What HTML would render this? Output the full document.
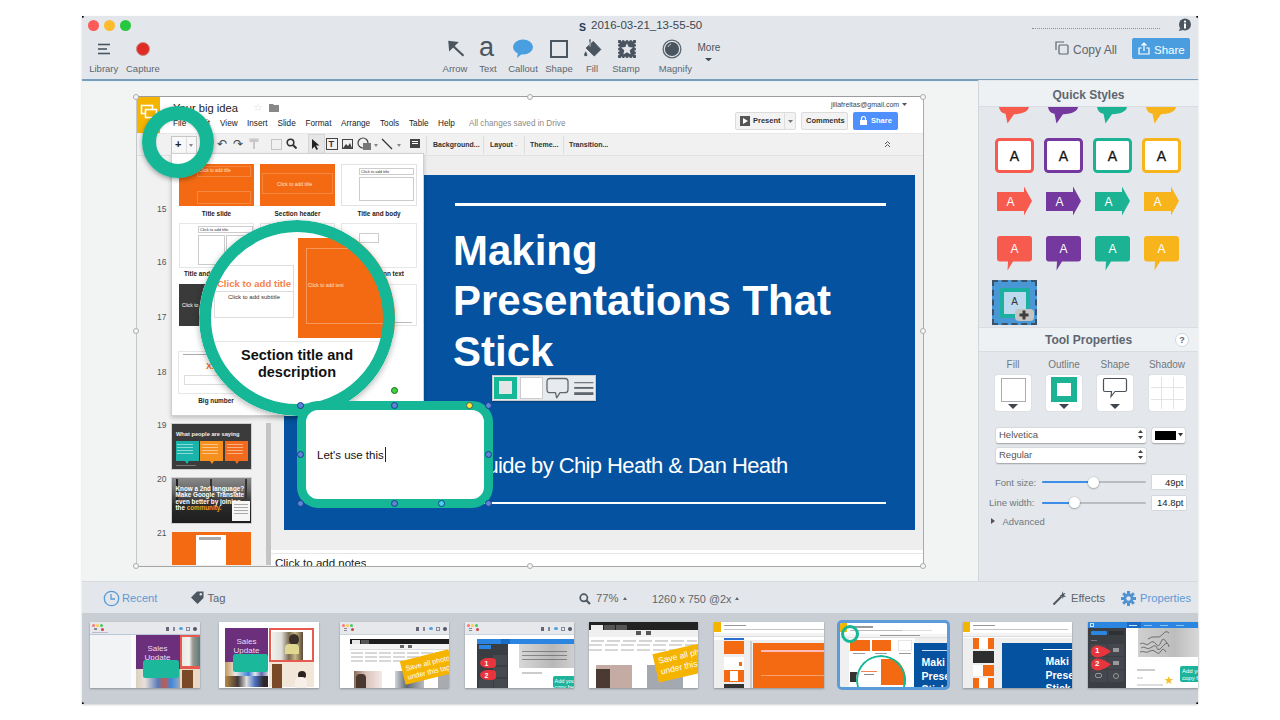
<!DOCTYPE html>
<html><head><meta charset="utf-8">
<style>
*{margin:0;padding:0;box-sizing:border-box}
html,body{width:1280px;height:720px;overflow:hidden;background:#fff;font-family:"Liberation Sans",sans-serif}
.a{position:absolute}
.t{position:absolute;white-space:nowrap;line-height:1}
#win{position:absolute;left:82px;top:16px;width:1116px;height:688px;background:#e4e7eb;overflow:hidden;box-shadow:0 1px 2px rgba(0,0,0,.18)}
</style></head><body>
<div id="win">
  <!-- toolbar -->
  <div class="a" style="left:0;top:0;width:1116px;height:63px;background:#e3e6ea"></div>
  <div class="a" style="left:0;top:63px;width:1116px;height:1.6px;background:#7b9db9"></div>
  <div class="a" style="left:0;top:61.5px;width:1116px;height:1.5px;background:#dde8f0"></div>
  <!-- traffic lights -->
  <div class="a" style="left:6px;top:4px;width:11px;height:11px;border-radius:50%;background:#fc5b57"></div>
  <div class="a" style="left:22px;top:4px;width:11px;height:11px;border-radius:50%;background:#fdbb2d"></div>
  <div class="a" style="left:38px;top:4px;width:11px;height:11px;border-radius:50%;background:#27c840"></div>


  <!-- toolbar items -->
  <svg class="a" style="left:15px;top:27px" width="14" height="12" viewBox="0 0 14 12"><g stroke="#4a5560" stroke-width="1.6"><line x1="1" y1="1.5" x2="13" y2="1.5"/><line x1="1" y1="6" x2="10" y2="6"/><line x1="1" y1="10.5" x2="13" y2="10.5"/></g></svg>
  <div class="a" style="left:53.5px;top:25.75px;width:14px;height:14px;border-radius:50%;background:#e02a24;border:1.5px solid #c98b8b"></div>

  <div class="t" style="left:-8.25px;top:48px;width:60px;text-align:center;font-size:9.5px;color:#5d6670">Library</div>
  <div class="t" style="left:30.900000000000006px;top:48px;width:60px;text-align:center;font-size:9.5px;color:#5d6670">Capture</div>
  <div class="t" style="left:343px;top:48px;width:60px;text-align:center;font-size:9.5px;color:#5d6670">Arrow</div>
  <div class="t" style="left:376px;top:48px;width:60px;text-align:center;font-size:9.5px;color:#5d6670">Text</div>
  <div class="t" style="left:411px;top:48px;width:60px;text-align:center;font-size:9.5px;color:#5d6670">Callout</div>
  <div class="t" style="left:447px;top:48px;width:60px;text-align:center;font-size:9.5px;color:#5d6670">Shape</div>
  <div class="t" style="left:480px;top:48px;width:60px;text-align:center;font-size:9.5px;color:#5d6670">Fill</div>
  <div class="t" style="left:514px;top:48px;width:60px;text-align:center;font-size:9.5px;color:#5d6670">Stamp</div>
  <div class="t" style="left:563.5px;top:48px;width:60px;text-align:center;font-size:9.5px;color:#5d6670">Magnify</div>
  <div class="t" style="left:497px;top:6px;font-size:10.5px;font-weight:bold;color:#1f3d5a">S</div>
  <div class="t" style="left:509px;top:4px;font-size:11.5px;color:#3e4750">2016-03-21_13-55-50</div>

  <svg class="a" style="left:364px;top:24px" width="20" height="18" viewBox="0 0 20 18"><path d="M2.2 0.8 L12.8 2 L3.2 11.5 Z" fill="#4a5560"/><line x1="6.5" y1="5.5" x2="17.5" y2="15.8" stroke="#4a5560" stroke-width="2.2"/></svg>
  <div class="t" style="left:397px;top:18px;font-size:27px;color:#4a5560;font-family:'Liberation Sans',sans-serif">a</div>
  <svg class="a" style="left:430px;top:23px" width="22" height="20" viewBox="0 0 22 20"><ellipse cx="11" cy="8" rx="10" ry="7.5" fill="#4a9fe0"/><path d="M6 13 L5 19 L11 14 Z" fill="#4a9fe0"/></svg>
  <div class="a" style="left:468px;top:24px;width:18px;height:18px;border:2px solid #4a5560"></div>
  <svg class="a" style="left:502px;top:22px" width="20" height="22" viewBox="0 0 20 22"><line x1="6" y1="1.2" x2="6" y2="9" stroke="#4a5560" stroke-width="1.4"/><path d="M2.1 10 L9.3 3.5 L16.8 11.5 L10.3 18Z" fill="#4a5560" stroke="#4a5560" stroke-width="1" stroke-linejoin="round"/><path d="M6 8.5 V3.8" stroke="#e3e6ea" stroke-width="0.9"/><path d="M1.7 13.2 Q-0.3 16.3 0.1 17.3 A1.75 1.75 0 0 0 3.3 17.3 Q3.7 16.3 1.7 13.2Z" fill="#4a5560"/></svg>
  <svg class="a" style="left:536px;top:23.5px" width="18" height="18" viewBox="0 0 18 18"><g fill="#4a5560"><rect x="1.6" y="1.6" width="14.8" height="14.8"/><circle cx="1.50" cy="1.6" r="1.6"/><circle cx="1.50" cy="16.4" r="1.6"/><circle cx="1.6" cy="1.50" r="1.6"/><circle cx="16.4" cy="1.50" r="1.6"/><circle cx="5.25" cy="1.6" r="1.6"/><circle cx="5.25" cy="16.4" r="1.6"/><circle cx="1.6" cy="5.25" r="1.6"/><circle cx="16.4" cy="5.25" r="1.6"/><circle cx="9.00" cy="1.6" r="1.6"/><circle cx="9.00" cy="16.4" r="1.6"/><circle cx="1.6" cy="9.00" r="1.6"/><circle cx="16.4" cy="9.00" r="1.6"/><circle cx="12.75" cy="1.6" r="1.6"/><circle cx="12.75" cy="16.4" r="1.6"/><circle cx="1.6" cy="12.75" r="1.6"/><circle cx="16.4" cy="12.75" r="1.6"/><circle cx="16.50" cy="1.6" r="1.6"/><circle cx="16.50" cy="16.4" r="1.6"/><circle cx="1.6" cy="16.50" r="1.6"/><circle cx="16.4" cy="16.50" r="1.6"/></g><polygon points="9.00,3.20 10.70,7.05 14.90,7.48 11.76,10.30 12.64,14.42 9.00,12.30 5.36,14.42 6.24,10.30 3.10,7.48 7.30,7.05" fill="#e3e6ea"/></svg>
  <svg class="a" style="left:579.8px;top:23px" width="20" height="20" viewBox="0 0 20 20"><circle cx="10" cy="10" r="8.9" fill="none" stroke="#5a6570" stroke-width="1.3"/><circle cx="10" cy="10" r="7.1" fill="#4a5560"/><path d="M6 8 A4.5 4.5 0 0 1 9 5" fill="none" stroke="#c8ced4" stroke-width="1"/></svg>
  <div class="t" style="left:615.5px;top:27px;font-size:10px;color:#4a5560">More</div>
  <svg class="a" style="left:623px;top:41.5px" width="7" height="4" viewBox="0 0 7 4"><path d="M0 0 H7 L3.5 3.2Z" fill="#3e4850"/></svg>


  <div class="a" style="left:950px;top:12px;width:128px;border-top:1.5px dotted #8a9096"></div>
  <svg class="a" style="left:1096px;top:2px" width="14" height="14" viewBox="0 0 14 14"><circle cx="7" cy="6.5" r="6" fill="#4a5560"/><path d="M2 10 L1 13 L5 12Z" fill="#4a5560"/><rect x="6" y="5.5" width="2" height="5" fill="#fff"/><circle cx="7" cy="3.6" r="1.1" fill="#fff"/></svg>

  <svg class="a" style="left:973px;top:25px" width="14" height="14" viewBox="0 0 14 14"><path d="M1 9 V1 H9" fill="none" stroke="#5d6670" stroke-width="1.2"/><rect x="4" y="4" width="9" height="9" rx="1" fill="none" stroke="#5d6670" stroke-width="1.2"/></svg>
  <div class="t" style="left:991px;top:28.3px;font-size:12px;color:#5d6670">Copy All</div>
  <div class="a" style="left:1050px;top:22px;width:58px;height:21px;background:#4a9ee0;border-radius:2px"></div>
  <svg class="a" style="left:1056px;top:26px" width="12" height="13" viewBox="0 0 12 13"><path d="M3.5 6 H1 V12 H11 V6 H8.5" fill="none" stroke="#fff" stroke-width="1.2"/><path d="M6 9 V1 M3.5 3.5 L6 1 L8.5 3.5" fill="none" stroke="#fff" stroke-width="1.2"/></svg>
  <div class="t" style="left:1072px;top:28.5px;font-size:11.5px;color:#fff">Share</div>

  <!-- canvas -->
  <div class="a" style="left:0;top:64.6px;width:896px;height:500.4px;background:#f2f3f3"></div>
  <div class="a" style="left:0;top:64.6px;width:1116px;height:2px;background:linear-gradient(#e0f2fa,#f2f3f3)"></div>
  <!-- right panel -->
  <div class="a" style="left:896px;top:64px;width:220px;height:501px;background:#e4e7eb;border-left:1px solid #d3d6da"></div>
  <!-- bottom bar -->
  <div class="a" style="left:0;top:565px;width:1116px;height:32px;background:#e3e6ea;border-top:1px solid #d6d9dd"></div>
  <!-- tray -->
  <div class="a" style="left:0;top:597px;width:1116px;height:92px;background:#c9ced5"></div>
</div>

<!-- ===== inner google slides screenshot (page coords) ===== -->
<div class="a" style="left:136px;top:96px;width:788px;height:471px;background:#eeeeee;border-top:1px solid #9a9c9e;border-bottom:1px solid #a4a6a8;border-right:1px solid #a8aaac;border-left:1px solid #c4c6c8"></div>
<div class="a" style="left:137px;top:97px;width:786px;height:36px;background:#fff"></div>
<div class="a" style="left:137px;top:97px;width:23px;height:36px;background:#f4b400"></div>
<svg class="a" style="left:140px;top:104px" width="18" height="16" viewBox="0 0 18 16"><rect x="1.5" y="1.5" width="11" height="8" fill="none" stroke="#fff" stroke-width="1.6"/><rect x="5.5" y="5.5" width="11" height="8" fill="#f4b400" stroke="#fff" stroke-width="1.6"/></svg>
<div class="t" style="left:173px;top:103px;font-size:11.2px;color:#222">Your big idea</div>
<div class="t" style="left:253px;top:102px;font-size:11px;color:#e3e3e3">&#9734;</div>
<svg class="a" style="left:269px;top:103px" width="10" height="9" viewBox="0 0 10 9"><path d="M0 1 H4 L5 2 H10 V9 H0Z" fill="#888"/></svg>
<div class="t" style="left:173px;top:120.2px;font-size:8.2px;color:#222">File</div>
<div class="t" style="left:196px;top:120.2px;font-size:8.2px;color:#222">Edit</div>
<div class="t" style="left:220px;top:120.2px;font-size:8.2px;color:#222">View</div>
<div class="t" style="left:247px;top:120.2px;font-size:8.2px;color:#222">Insert</div>
<div class="t" style="left:277.5px;top:120.2px;font-size:8.2px;color:#222">Slide</div>
<div class="t" style="left:305.5px;top:120.2px;font-size:8.2px;color:#222">Format</div>
<div class="t" style="left:341px;top:120.2px;font-size:8.2px;color:#222">Arrange</div>
<div class="t" style="left:380px;top:120.2px;font-size:8.2px;color:#222">Tools</div>
<div class="t" style="left:409px;top:120.2px;font-size:8.2px;color:#222">Table</div>
<div class="t" style="left:438px;top:120.2px;font-size:8.2px;color:#222">Help</div>
<div class="t" style="left:469px;top:120.2px;font-size:8.2px;color:#8a8a8a">All changes saved in Drive</div>
<div class="t" style="left:831px;top:101px;font-size:7px;color:#444">jillafreitas@gmail.com</div>
<svg class="a" style="left:902px;top:103px" width="5" height="3"><path d="M0 0H5L2.5 3Z" fill="#555"/></svg>
<div class="a" style="left:735px;top:112px;width:61px;height:18px;background:#f3f3f3;border:1px solid #dcdcdc;border-radius:2px"></div>
<svg class="a" style="left:740px;top:116px" width="10" height="10"><rect width="10" height="10" fill="#555"/><path d="M3 2 L8 5 L3 8Z" fill="#fff"/></svg>
<div class="t" style="left:753px;top:117px;font-size:7.5px;font-weight:bold;color:#333">Present</div>
<div class="a" style="left:784px;top:113px;width:1px;height:16px;background:#ddd"></div>
<svg class="a" style="left:788px;top:120px" width="5" height="3"><path d="M0 0H5L2.5 3Z" fill="#777"/></svg>
<div class="a" style="left:801px;top:112px;width:47px;height:18px;background:#f3f3f3;border:1px solid #dcdcdc;border-radius:2px"></div>
<div class="t" style="left:806px;top:117px;font-size:7.5px;font-weight:bold;color:#333">Comments</div>
<div class="a" style="left:853px;top:112px;width:45px;height:18px;background:#4d90fe;border-radius:2px"></div>
<svg class="a" style="left:860px;top:116px" width="7" height="9"><rect x="0" y="4" width="7" height="5" fill="#fff"/><path d="M1.5 4.5 V2.5 A2 2 0 0 1 5.5 2.5 V4.5" fill="none" stroke="#fff" stroke-width="1.2"/></svg>
<div class="t" style="left:871px;top:117px;font-size:7.5px;font-weight:bold;color:#fff">Share</div>

<!-- gs toolbar -->
<div class="a" style="left:137px;top:133px;width:786px;height:23px;background:#f1f1f1;border-top:1px solid #e8e8e8;border-bottom:1px solid #e2e2e2"></div>
<div class="a" style="left:171px;top:136px;width:26px;height:18px;border:1px solid #c6c6c6;background:#f8f8f8"></div>
<div class="t" style="left:175px;top:139px;font-size:11px;font-weight:bold;color:#222">+</div>
<div class="a" style="left:186px;top:137px;width:1px;height:16px;background:#ddd"></div>
<svg class="a" style="left:189px;top:144px" width="4" height="3"><path d="M0 0H4L2 3Z" fill="#888"/></svg>
<div class="t" style="left:216.5px;top:138px;font-size:12px;color:#444">&#8630;</div>
<div class="t" style="left:232.5px;top:138px;font-size:12px;color:#444">&#8631;</div>
<svg class="a" style="left:249px;top:138px" width="10" height="12" viewBox="0 0 10 12"><rect x="0.5" y="0.5" width="9" height="3.5" fill="#c8c8c8"/><rect x="4" y="4" width="2" height="7" fill="#c8c8c8"/></svg>
<div class="a" style="left:271px;top:138.5px;width:11px;height:11px;border:1px solid #c4c4c4"></div>
<svg class="a" style="left:286px;top:138px" width="11" height="11"><circle cx="4.5" cy="4.5" r="3.3" fill="none" stroke="#333" stroke-width="1.6"/><line x1="7" y1="7" x2="10.5" y2="10.5" stroke="#333" stroke-width="2"/></svg>
<div class="a" style="left:307.5px;top:134px;width:17px;height:21px;background:#e6e6e6;border:1px solid #d6d6d6"></div>
<svg class="a" style="left:312px;top:138.5px" width="8" height="11"><path d="M0 0 V10 L2.5 7.5 L4.5 11 L6 10 L4 6.5 H7.5Z" fill="#222"/></svg>
<div class="a" style="left:325.5px;top:138px;width:12px;height:12px;border:1.2px solid #444"></div>
<div class="t" style="left:328.5px;top:140px;font-size:9px;font-weight:bold;color:#333">T</div>
<svg class="a" style="left:342px;top:139px" width="11" height="10"><rect x=".5" y=".5" width="10" height="9" fill="none" stroke="#444"/><path d="M1 9 L4 5 L6 7 L8 4 L10 9Z" fill="#444"/></svg>
<svg class="a" style="left:357px;top:137px" width="16" height="14"><circle cx="6" cy="6" r="5" fill="none" stroke="#444" stroke-width="1.2"/><rect x="6" y="6" width="8" height="7" fill="#777"/></svg>
<svg class="a" style="left:374px;top:144px" width="4" height="3"><path d="M0 0H4L2 3Z" fill="#888"/></svg>
<svg class="a" style="left:381px;top:138px" width="12" height="12"><line x1="1" y1="1" x2="11" y2="11" stroke="#333" stroke-width="1.3"/></svg>
<svg class="a" style="left:397px;top:144px" width="4" height="3"><path d="M0 0H4L2 3Z" fill="#888"/></svg>
<svg class="a" style="left:409px;top:138px" width="12" height="12"><rect x="1" y="1" width="10" height="9" fill="#444"/><rect x="3" y="3" width="6" height="1" fill="#fff"/><rect x="3" y="5" width="6" height="1" fill="#fff"/></svg>
<div class="a" style="left:426px;top:136px;width:1px;height:18px;background:#ddd"></div>
<div class="t" style="left:433px;top:141px;font-size:7px;font-weight:bold;color:#333">Background...</div>
<div class="a" style="left:483px;top:136px;width:1px;height:18px;background:#ddd"></div>
<div class="t" style="left:490px;top:141px;font-size:7px;font-weight:bold;color:#333">Layout</div>
<div class="t" style="left:515px;top:141px;font-size:7px;color:#888">-</div>
<div class="a" style="left:524px;top:136px;width:1px;height:18px;background:#ddd"></div>
<div class="t" style="left:530px;top:141px;font-size:7px;font-weight:bold;color:#333">Theme...</div>
<div class="a" style="left:563px;top:136px;width:1px;height:18px;background:#ddd"></div>
<div class="t" style="left:569px;top:141px;font-size:7px;font-weight:bold;color:#333">Transition...</div>
<svg class="a" style="left:884px;top:140px" width="7" height="8" viewBox="0 0 7 8"><path d="M1 4 L3.5 1.5 L6 4 M1 7 L3.5 4.5 L6 7" fill="none" stroke="#555" stroke-width="1"/></svg>

<!-- filmstrip -->
<div class="a" style="left:137px;top:156px;width:129px;height:409px;background:#f1f1f1"></div>
<div class="a" style="left:266px;top:423px;width:5px;height:142px;background:#c4c4c4"></div>
<div class="t" style="left:157px;top:204.5px;font-size:8.5px;color:#555">15</div>
<div class="t" style="left:157px;top:258px;font-size:8.5px;color:#555">16</div>
<div class="t" style="left:157px;top:313px;font-size:8.5px;color:#555">17</div>
<div class="t" style="left:157px;top:367.5px;font-size:8.5px;color:#555">18</div>
<div class="t" style="left:157px;top:421px;font-size:8.5px;color:#555">19</div>
<div class="t" style="left:157px;top:475px;font-size:8.5px;color:#555">20</div>
<div class="t" style="left:157px;top:529px;font-size:8.5px;color:#555">21</div>
<!-- thumb 19 -->
<div class="a" style="left:172px;top:423.8px;width:79.3px;height:44.8px;background:#3b3b3b;outline:1px solid #cfcfcf"></div>
<div class="t" style="left:176px;top:431.5px;font-size:5.7px;font-weight:bold;color:#f0f0f0">What people are saying</div>
<div class="a" style="left:175.6px;top:441.4px;width:23px;height:19.6px;background:#19b5ad"></div>
<div class="a" style="left:185px;top:461px;width:0;height:0;border-left:2.5px solid transparent;border-right:2.5px solid transparent;border-top:3px solid #19b5ad"></div>
<div class="a" style="left:200px;top:441.4px;width:23px;height:19.6px;background:#f5901e"></div>
<div class="a" style="left:209.5px;top:461px;width:0;height:0;border-left:2.5px solid transparent;border-right:2.5px solid transparent;border-top:3px solid #f5901e"></div>
<div class="a" style="left:225.3px;top:441.4px;width:22.5px;height:19.6px;background:#f26a1b"></div>
<div class="a" style="left:234.5px;top:461px;width:0;height:0;border-left:2.5px solid transparent;border-right:2.5px solid transparent;border-top:3px solid #f26a1b"></div>
<div class="a" style="left:177px;top:443.5px;width:16px;height:12px;background:repeating-linear-gradient(#e8f8f6 0 1px,transparent 1px 3px);opacity:.55"></div>
<div class="a" style="left:202px;top:443.5px;width:16px;height:12px;background:repeating-linear-gradient(#fff0e0 0 1px,transparent 1px 3px);opacity:.55"></div>
<div class="a" style="left:227px;top:443.5px;width:16px;height:12px;background:repeating-linear-gradient(#ffe8e0 0 1px,transparent 1px 3px);opacity:.55"></div>
<div class="a" style="left:176px;top:465px;width:20px;height:1px;background:#777"></div>
<!-- thumb 20 -->
<div class="a" style="left:172px;top:478px;width:79.3px;height:44.7px;background:linear-gradient(#8a8a8a 0,#6a6a6a 25%,#2a2a2a 60%,#1e1e1e 100%);outline:1px solid #cfcfcf"></div>
<div class="a" style="left:176px;top:479px;width:2px;height:43px;background:#222"></div>
<div class="a" style="left:210px;top:479px;width:2px;height:20px;background:#333"></div>
<div class="a" style="left:245px;top:479px;width:2px;height:20px;background:#333"></div>
<div class="t" style="left:175.5px;top:485.5px;font-size:6.3px;font-weight:bold;color:#fff;line-height:6.5px">Know a 2nd language?<br>Make Google Translate<br>even better by joining<br>the <span style="color:#f5a31b">community.</span></div>
<div class="a" style="left:232.2px;top:501px;width:18px;height:19.8px;background:#f6f6f6"></div>
<div class="a" style="left:234px;top:504px;width:14px;height:12px;background:repeating-linear-gradient(#aaa 0 1px,transparent 1px 3px)"></div>
<!-- thumb 21 -->
<div class="a" style="left:172px;top:532px;width:79px;height:33px;background:#f46a12"></div>
<div class="a" style="left:196px;top:535px;width:30px;height:30px;background:#fff"></div>
<div class="a" style="left:199px;top:537px;width:22px;height:3px;background:#aaa"></div>

<!-- blue slide -->
<div class="a" style="left:284px;top:175px;width:631px;height:355px;background:#0452a0"></div>
<div class="a" style="left:455px;top:202.5px;width:431px;height:3px;background:#fff"></div>
<div class="a" style="left:455px;top:502px;width:431px;height:2px;background:#fff"></div>
<div class="t" style="left:453px;top:225.8px;font-size:42px;font-weight:bold;color:#fff;line-height:50.5px">Making<br>Presentations That<br>Stick</div>
<div class="t" style="left:451.5px;top:455px;font-size:22px;color:#fff;letter-spacing:-0.6px">A Guide by <span id="chip">Chip</span> Heath &amp; Dan Heath</div>

<!-- notes -->
<div class="a" style="left:271px;top:549.5px;width:652px;height:16.5px;background:#fff;overflow:hidden"></div>
<div class="a" style="left:271px;top:553px;width:652px;height:1px;background:#e6e6e6"></div>
<div class="t" style="left:275px;top:557.5px;font-size:11.5px;color:#222;height:8.5px;overflow:hidden">Click to add notes</div>

<!-- resize handles -->
<div class="a" style="left:133px;top:93.5px;width:6px;height:6px;border-radius:50%;background:#f6f6f6;border:1px solid #a9acaf"></div>
<div class="a" style="left:526.5px;top:93.5px;width:6px;height:6px;border-radius:50%;background:#f6f6f6;border:1px solid #a9acaf"></div>
<div class="a" style="left:920px;top:93.5px;width:6px;height:6px;border-radius:50%;background:#f6f6f6;border:1px solid #a9acaf"></div>
<div class="a" style="left:133px;top:328px;width:6px;height:6px;border-radius:50%;background:#f6f6f6;border:1px solid #a9acaf"></div>
<div class="a" style="left:920px;top:328px;width:6px;height:6px;border-radius:50%;background:#f6f6f6;border:1px solid #a9acaf"></div>
<div class="a" style="left:133px;top:563px;width:6px;height:6px;border-radius:50%;background:#f6f6f6;border:1px solid #a9acaf"></div>
<div class="a" style="left:526.5px;top:563px;width:6px;height:6px;border-radius:50%;background:#f6f6f6;border:1px solid #a9acaf"></div>
<div class="a" style="left:920px;top:563px;width:6px;height:6px;border-radius:50%;background:#f6f6f6;border:1px solid #a9acaf"></div>
<!-- layout dropdown panel -->
<div class="a" style="left:171px;top:153px;width:253px;height:263px;background:#fff;border:1px solid #d0d0d0;box-shadow:0 2px 4px rgba(0,0,0,.2)"></div>
<!-- row 1 -->
<div class="a" style="left:179px;top:164px;width:75px;height:42px;background:#f46a12"></div>
<div class="a" style="left:197px;top:166px;width:54px;height:11px;border:1px solid rgba(255,255,255,.2)"></div>
<div class="t" style="left:199px;top:169px;font-size:4.5px;color:#fde0cc">Click to add title</div>
<div class="a" style="left:197px;top:191px;width:54px;height:13px;border:1px solid rgba(255,255,255,.2)"></div>
<div class="a" style="left:260px;top:164px;width:75px;height:42px;background:#f46a12"></div>
<div class="a" style="left:262px;top:173px;width:71px;height:21px;border:1px solid rgba(255,255,255,.2)"></div>
<div class="t" style="left:277px;top:182px;font-size:5px;color:#fde0cc">Click to add title</div>
<div class="a" style="left:341px;top:164px;width:76px;height:42px;background:#fff;border:1px solid #e3e3e3"></div>
<div class="a" style="left:359px;top:168px;width:55px;height:7px;border:1px solid #ccc"></div>
<div class="t" style="left:361px;top:169.5px;font-size:4px;color:#333">Click to add title</div>
<div class="a" style="left:359px;top:177px;width:55px;height:24px;border:1px solid #ccc"></div>
<div class="t" style="left:179px;top:210.5px;width:75px;text-align:center;font-size:6.4px;font-weight:bold;color:#222">Title slide</div>
<div class="t" style="left:260px;top:210.5px;width:75px;text-align:center;font-size:6.4px;font-weight:bold;color:#222">Section header</div>
<div class="t" style="left:341px;top:210.5px;width:76px;text-align:center;font-size:6.4px;font-weight:bold;color:#222">Title and body</div>
<!-- row 2 -->
<div class="a" style="left:179px;top:223px;width:75px;height:45px;background:#fff;border:1px solid #e6e6e6"></div>
<div class="a" style="left:198px;top:226px;width:55px;height:7px;border:1px solid #ccc"></div>
<div class="t" style="left:200px;top:227.5px;font-size:4px;color:#333">Click to add title</div>
<div class="a" style="left:198px;top:235px;width:27px;height:30px;border:1px solid #ccc"></div>
<div class="a" style="left:226px;top:235px;width:27px;height:30px;border:1px solid #ccc"></div>
<div class="a" style="left:260px;top:223px;width:75px;height:45px;background:#fff;border:1px solid #e6e6e6"></div>
<div class="a" style="left:341px;top:223px;width:76px;height:45px;background:#fff;border:1px solid #e6e6e6"></div>
<div class="a" style="left:359px;top:233px;width:20px;height:10px;border:1px solid #ccc"></div>
<div class="t" style="left:184px;top:270.5px;font-size:6.4px;font-weight:bold;color:#222">Title and body</div>
<div class="t" style="left:341px;top:270.5px;width:76px;text-align:center;font-size:6.4px;font-weight:bold;color:#222">Two column text</div>
<!-- row 3 -->
<div class="a" style="left:179px;top:284px;width:75px;height:42px;background:#3a3a3a"></div>
<div class="t" style="left:182px;top:303px;font-size:5px;color:#fff">Click to add title</div>
<div class="a" style="left:341px;top:284px;width:76px;height:42px;background:#fff;border:1px solid #e6e6e6"></div>
<div class="a" style="left:352px;top:322px;width:60px;height:1px;background:#bbb"></div>
<!-- row 4 -->
<div class="a" style="left:178px;top:351px;width:75px;height:43px;background:#fff;border:1px solid #e6e6e6"></div>
<div class="a" style="left:183px;top:354px;width:66px;height:1px;background:#aaa"></div>
<div class="t" style="left:206px;top:362px;font-size:9px;font-weight:bold;color:#f46a12">XX%</div>
<div class="a" style="left:184px;top:375px;width:65px;height:10px;border:1px solid #ddd"></div>
<div class="t" style="left:178px;top:397.5px;width:76px;text-align:center;font-size:6.4px;font-weight:bold;color:#222">Big number</div>

<!-- magnifier big ring -->
<div class="a" style="left:199px;top:220px;width:196px;height:196px;border-radius:50%;overflow:hidden;background:#fff;box-shadow:0 2px 6px rgba(0,0,0,.3)">
  <div class="a" style="left:15px;top:45px;width:80px;height:53px;border:1px solid #ddd;background:#fff"></div>
  <div class="a" style="left:15px;top:71px;width:80px;height:1px;background:#ddd"></div>
  <div class="t" style="left:15px;top:58.5px;width:80px;text-align:center;font-size:9.6px;font-weight:bold;color:#f4834c">Click to add title</div>
  <div class="t" style="left:15px;top:74px;width:80px;text-align:center;font-size:6px;color:#333">Click to add subtitle</div>
  <div class="a" style="left:99px;top:18px;width:100px;height:100px;background:#f46a12"></div>
  <div class="a" style="left:107px;top:28px;width:90px;height:76px;border:1px solid rgba(255,255,255,.3)"></div>
  <div class="t" style="left:109px;top:63px;font-size:5px;color:#fde0cc">Click to add text</div>
  <div class="a" style="left:0;top:121px;width:196px;height:1px;background:#e6e6e6"></div>
  <div class="t" style="left:0;top:127px;width:196px;text-align:center;font-size:14.5px;font-weight:bold;color:#111;line-height:16.5px">Section title and<br>description</div>
  <div class="a" style="left:0;top:0;width:196px;height:196px;border-radius:50%;border:12px solid #15b797"></div>
</div>

<!-- small ring -->
<div class="a" style="left:142px;top:106px;width:72px;height:72px;border-radius:50%;border:14px solid #15b797;box-shadow:0 2px 5px rgba(0,0,0,.35), inset 0 1px 3px rgba(0,0,0,.15)"></div>

<!-- callout textbox -->
<div class="a" style="left:296.5px;top:401px;width:196px;height:107px;border-radius:21px;background:#fff;border:9px solid #15b797"></div>
<div class="t" style="left:317px;top:450px;font-size:11.5px;color:#111">Let's use this</div>
<div class="a" style="left:384.5px;top:447px;width:1px;height:15px;background:#222"></div>
<!-- handles -->
<div class="a" style="left:297px;top:401.5px;width:7px;height:7px;border-radius:50%;background:#5b86d6;border:1px solid #1a3d8a"></div>
<div class="a" style="left:391px;top:401.5px;width:7px;height:7px;border-radius:50%;background:#5b86d6;border:1px solid #1a3d8a"></div>
<div class="a" style="left:466px;top:401.5px;width:7px;height:7px;border-radius:50%;background:#ffee33;border:1px solid #555"></div>
<div class="a" style="left:485px;top:401.5px;width:7px;height:7px;border-radius:50%;background:#5b86d6;border:1px solid #1a3d8a"></div>
<div class="a" style="left:297px;top:450.5px;width:7px;height:7px;border-radius:50%;background:#5b86d6;border:1px solid #1a3d8a"></div>
<div class="a" style="left:485px;top:450.5px;width:7px;height:7px;border-radius:50%;background:#5b86d6;border:1px solid #1a3d8a"></div>
<div class="a" style="left:297px;top:500px;width:7px;height:7px;border-radius:50%;background:#5b86d6;border:1px solid #1a3d8a"></div>
<div class="a" style="left:391px;top:500px;width:7px;height:7px;border-radius:50%;background:#5b86d6;border:1px solid #1a3d8a"></div>
<div class="a" style="left:437.5px;top:500px;width:7px;height:7px;border-radius:50%;background:#44d4e8;border:1px solid #1a3d8a"></div>
<div class="a" style="left:485px;top:500px;width:7px;height:7px;border-radius:50%;background:#5b86d6;border:1px solid #1a3d8a"></div>
<div class="a" style="left:391px;top:386.5px;width:7px;height:7px;border-radius:50%;background:#3ed23e;border:1px solid #1a6a1a"></div>

<!-- floating mini toolbar -->
<div class="a" style="left:492px;top:374.5px;width:104px;height:26px;background:#e8ebee;border:1px solid #c7cbcf;box-shadow:0 1px 2px rgba(0,0,0,.25)"></div>
<div class="a" style="left:494px;top:376.5px;width:23px;height:22px;background:#15b797"></div>
<div class="a" style="left:499px;top:381px;width:13px;height:13px;background:#e4e6e8"></div>
<div class="a" style="left:520px;top:376.5px;width:23px;height:22px;background:#fff;border:1px solid #ccc"></div>
<svg class="a" style="left:545px;top:377px" width="25" height="23" viewBox="0 0 25 23"><path d="M5 1.5 H20 Q23 1.5 23 4.5 V12.7 Q23 15.7 20 15.7 H15 L11.7 20.8 L10.5 15.7 H5 Q2 15.7 2 12.7 V4.5 Q2 1.5 5 1.5Z" fill="none" stroke="#60686f" stroke-width="1.3" stroke-linejoin="round"/></svg>
<svg class="a" style="left:572px;top:380px" width="22" height="16" viewBox="0 0 22 16"><g stroke="#5e666d"><line x1="2.2" y1="2.7" x2="21.4" y2="2.7" stroke-width="1.1"/><line x1="2.2" y1="7.9" x2="21.4" y2="7.9" stroke-width="1.9"/><line x1="2.2" y1="13.6" x2="21.4" y2="13.6" stroke-width="2.8"/></g></svg>

<!-- ===== right panel ===== -->
<div class="a" style="left:979px;top:81px;width:219px;height:26px;background:#eef1f4;border-bottom:1px solid #d9dce0"></div>
<div class="t" style="left:979px;top:88.5px;width:219px;text-align:center;font-size:12px;font-weight:bold;color:#5d6670">Quick Styles</div>
<svg class="a" style="left:997px;top:107px" width="36" height="18" viewBox="0 0 36 18"><path d="M2 0 H32 Q31 6.5 17 7.3 L10.5 16.5 L8.5 6.8 Q2.5 5.5 2 0Z" fill="#f65b4e"/></svg>
<div class="a" style="left:995px;top:138px;width:39px;height:35px;border:3.5px solid #f65b4e;border-radius:4.5px;background:#fff"></div>
<div class="t" style="left:995px;top:148.5px;width:39px;text-align:center;font-size:14px;color:#111;-webkit-text-stroke:0.3px #111">A</div>
<svg class="a" style="left:997px;top:186px" width="36" height="30" viewBox="0 0 36 30"><path d="M0 6 H27 V0.5 L35 15 L27 29.5 V25 H0Z" fill="#f65b4e"/></svg>
<div class="t" style="left:997px;top:195.5px;width:27px;text-align:center;font-size:12px;color:#fff">A</div>
<svg class="a" style="left:997px;top:236px" width="36" height="36" viewBox="0 0 36 36"><path d="M3 0 H32 Q35 0 35 3 V22.5 Q35 25.5 32 25.5 H16 L10.5 34.5 L11 25.5 H3 Q0 25.5 0 22.5 V3 Q0 0 3 0Z" fill="#f65b4e"/></svg>
<div class="t" style="left:997px;top:242.5px;width:35px;text-align:center;font-size:12px;color:#fff">A</div>
<svg class="a" style="left:1046px;top:107px" width="36" height="18" viewBox="0 0 36 18"><path d="M2 0 H32 Q31 6.5 17 7.3 L10.5 16.5 L8.5 6.8 Q2.5 5.5 2 0Z" fill="#74389e"/></svg>
<div class="a" style="left:1044px;top:138px;width:39px;height:35px;border:3.5px solid #74389e;border-radius:4.5px;background:#fff"></div>
<div class="t" style="left:1044px;top:148.5px;width:39px;text-align:center;font-size:14px;color:#111;-webkit-text-stroke:0.3px #111">A</div>
<svg class="a" style="left:1046px;top:186px" width="36" height="30" viewBox="0 0 36 30"><path d="M0 6 H27 V0.5 L35 15 L27 29.5 V25 H0Z" fill="#74389e"/></svg>
<div class="t" style="left:1046px;top:195.5px;width:27px;text-align:center;font-size:12px;color:#fff">A</div>
<svg class="a" style="left:1046px;top:236px" width="36" height="36" viewBox="0 0 36 36"><path d="M3 0 H32 Q35 0 35 3 V22.5 Q35 25.5 32 25.5 H16 L10.5 34.5 L11 25.5 H3 Q0 25.5 0 22.5 V3 Q0 0 3 0Z" fill="#74389e"/></svg>
<div class="t" style="left:1046px;top:242.5px;width:35px;text-align:center;font-size:12px;color:#fff">A</div>
<svg class="a" style="left:1095px;top:107px" width="36" height="18" viewBox="0 0 36 18"><path d="M2 0 H32 Q31 6.5 17 7.3 L10.5 16.5 L8.5 6.8 Q2.5 5.5 2 0Z" fill="#1bb394"/></svg>
<div class="a" style="left:1093px;top:138px;width:39px;height:35px;border:3.5px solid #1bb394;border-radius:4.5px;background:#fff"></div>
<div class="t" style="left:1093px;top:148.5px;width:39px;text-align:center;font-size:14px;color:#111;-webkit-text-stroke:0.3px #111">A</div>
<svg class="a" style="left:1095px;top:186px" width="36" height="30" viewBox="0 0 36 30"><path d="M0 6 H27 V0.5 L35 15 L27 29.5 V25 H0Z" fill="#1bb394"/></svg>
<div class="t" style="left:1095px;top:195.5px;width:27px;text-align:center;font-size:12px;color:#fff">A</div>
<svg class="a" style="left:1095px;top:236px" width="36" height="36" viewBox="0 0 36 36"><path d="M3 0 H32 Q35 0 35 3 V22.5 Q35 25.5 32 25.5 H16 L10.5 34.5 L11 25.5 H3 Q0 25.5 0 22.5 V3 Q0 0 3 0Z" fill="#1bb394"/></svg>
<div class="t" style="left:1095px;top:242.5px;width:35px;text-align:center;font-size:12px;color:#fff">A</div>
<svg class="a" style="left:1144px;top:107px" width="36" height="18" viewBox="0 0 36 18"><path d="M2 0 H32 Q31 6.5 17 7.3 L10.5 16.5 L8.5 6.8 Q2.5 5.5 2 0Z" fill="#f8b41b"/></svg>
<div class="a" style="left:1142px;top:138px;width:39px;height:35px;border:3.5px solid #f8b41b;border-radius:4.5px;background:#fff"></div>
<div class="t" style="left:1142px;top:148.5px;width:39px;text-align:center;font-size:14px;color:#111;-webkit-text-stroke:0.3px #111">A</div>
<svg class="a" style="left:1144px;top:186px" width="36" height="30" viewBox="0 0 36 30"><path d="M0 6 H27 V0.5 L35 15 L27 29.5 V25 H0Z" fill="#f8b41b"/></svg>
<div class="t" style="left:1144px;top:195.5px;width:27px;text-align:center;font-size:12px;color:#fff">A</div>
<svg class="a" style="left:1144px;top:236px" width="36" height="36" viewBox="0 0 36 36"><path d="M3 0 H32 Q35 0 35 3 V22.5 Q35 25.5 32 25.5 H16 L10.5 34.5 L11 25.5 H3 Q0 25.5 0 22.5 V3 Q0 0 3 0Z" fill="#f8b41b"/></svg>
<div class="t" style="left:1144px;top:242.5px;width:35px;text-align:center;font-size:12px;color:#fff">A</div>

<div class="a" style="left:992px;top:280px;width:45px;height:45px;background:#4a97d6;border:2px dashed #3d5266"></div>
<div class="a" style="left:999.5px;top:287.5px;width:30px;height:30px;background:#1bb0a0"></div>
<div class="a" style="left:1003.5px;top:291.5px;width:22px;height:22px;background:#bcd9ee"></div>
<div class="t" style="left:1003.5px;top:297px;width:22px;text-align:center;font-size:10px;color:#333">A</div>
<div class="a" style="left:1014.5px;top:308.5px;width:19px;height:12px;background:#c4c4c4;border-radius:4px"></div>
<svg class="a" style="left:1019px;top:309.5px" width="10" height="10" viewBox="0 0 10 10"><path d="M3.5 0.5 H6.5 V3.5 H9.5 V6.5 H6.5 V9.5 H3.5 V6.5 H0.5 V3.5 H3.5Z" fill="#3d3d3d"/></svg>

<!-- tool properties -->
<div class="a" style="left:979px;top:326.5px;width:219px;height:25px;background:#eef1f4;border-top:1px solid #d9dce0;border-bottom:1px solid #d9dce0"></div>
<div class="t" style="left:979px;top:333.5px;width:219px;text-align:center;font-size:12px;font-weight:bold;color:#5d6670">Tool Properties</div>
<div class="a" style="left:1175px;top:332.5px;width:14px;height:14px;border-radius:50%;background:#fff;border:1px solid #d3d6da"></div>
<div class="t" style="left:1175px;top:335.5px;width:14px;text-align:center;font-size:9px;font-weight:bold;color:#5d6670">?</div>
<div class="t" style="left:995px;top:359.5px;width:36px;text-align:center;font-size:10px;color:#70787f">Fill</div>
<div class="t" style="left:1041px;top:359.5px;width:46px;text-align:center;font-size:10px;color:#70787f">Outline</div>
<div class="t" style="left:1094px;top:359.5px;width:42px;text-align:center;font-size:10px;color:#70787f">Shape</div>
<div class="t" style="left:1144px;top:359.5px;width:46px;text-align:center;font-size:10px;color:#70787f">Shadow</div>

<div class="a" style="left:995px;top:374.5px;width:36px;height:36px;background:#fff;border-radius:2px;box-shadow:0 0 1px rgba(0,0,0,.3)"></div>
<div class="a" style="left:1000.5px;top:377.5px;width:25px;height:24px;border:1px solid #a8adb2"></div>
<svg class="a" style="left:1008px;top:403.5px" width="10" height="5"><path d="M0 0H10L5 5Z" fill="#3e454c"/></svg>
<div class="a" style="left:1046px;top:374.5px;width:36px;height:36px;background:#fff;border-radius:2px;box-shadow:0 0 1px rgba(0,0,0,.3)"></div>
<div class="a" style="left:1051px;top:377px;width:26px;height:25px;border:6.5px solid #1bb394;background:#fff"></div>
<svg class="a" style="left:1059px;top:403.5px" width="10" height="5"><path d="M0 0H10L5 5Z" fill="#3e454c"/></svg>
<div class="a" style="left:1097px;top:374.5px;width:36px;height:36px;background:#fff;border-radius:2px;box-shadow:0 0 1px rgba(0,0,0,.3)"></div>
<svg class="a" style="left:1102px;top:377px" width="26" height="24" viewBox="0 0 26 24"><path d="M3 1.5 H23 Q24.5 1.5 24.5 3 V13 Q24.5 14.5 23 14.5 H13 L9 19.5 L9.5 14.5 H3 Q1.5 14.5 1.5 13 V3 Q1.5 1.5 3 1.5Z" fill="#fff" stroke="#4a5158" stroke-width="1.2"/></svg>
<svg class="a" style="left:1110px;top:403.5px" width="10" height="5"><path d="M0 0H10L5 5Z" fill="#3e454c"/></svg>
<div class="a" style="left:1148.5px;top:374.5px;width:37px;height:36px;background:#fff;border-radius:2px;box-shadow:0 0 1px rgba(0,0,0,.3)"></div>
<svg class="a" style="left:1148.5px;top:374.5px" width="37" height="36"><g stroke="#e1e4e7" stroke-width="1"><line x1="12.5" y1="2" x2="12.5" y2="34"/><line x1="24.5" y1="2" x2="24.5" y2="34"/><line x1="2" y1="12.5" x2="35" y2="12.5"/><line x1="2" y1="24.5" x2="35" y2="24.5"/></g></svg>

<div class="a" style="left:995.5px;top:427.5px;width:150px;height:15px;background:#fff;border-radius:2px;box-shadow:0 0.5px 1.5px rgba(0,0,0,.3)"></div>
<div class="t" style="left:999px;top:430px;font-size:9.5px;color:#555">Helvetica</div>
<svg class="a" style="left:1138px;top:429px" width="5" height="11"><path d="M0 4 L2.5 1 L5 4Z M0 7 L2.5 10 L5 7Z" fill="#444"/></svg>
<div class="a" style="left:995.5px;top:447.5px;width:150px;height:15px;background:#fff;border-radius:2px;box-shadow:0 0.5px 1.5px rgba(0,0,0,.3)"></div>
<div class="t" style="left:999px;top:450px;font-size:9.5px;color:#555">Regular</div>
<svg class="a" style="left:1138px;top:449px" width="5" height="11"><path d="M0 4 L2.5 1 L5 4Z M0 7 L2.5 10 L5 7Z" fill="#444"/></svg>
<div class="a" style="left:1152px;top:427.5px;width:33px;height:15px;background:#fff;border-radius:2px;box-shadow:0 0.5px 1.5px rgba(0,0,0,.3)"></div>
<div class="a" style="left:1154.5px;top:430.5px;width:21px;height:9px;background:#000"></div>
<svg class="a" style="left:1177.5px;top:433px" width="5" height="4"><path d="M0 0H5L2.5 3.5Z" fill="#333"/></svg>

<div class="t" style="left:995px;top:477.5px;font-size:9.5px;color:#70787f">Font size:</div>
<div class="a" style="left:1042px;top:481px;width:104px;height:2px;background:#b9bdc1;border-radius:1px"></div>
<div class="a" style="left:1042px;top:481px;width:51px;height:2px;background:#3d8ee6;border-radius:1px"></div>
<div class="a" style="left:1087.5px;top:476.5px;width:11px;height:11px;border-radius:50%;background:#fff;box-shadow:0 0.5px 2px rgba(0,0,0,.45)"></div>
<div class="a" style="left:1151.5px;top:475px;width:34px;height:14px;background:#fff;box-shadow:0 0 1px rgba(0,0,0,.4)"></div>
<div class="t" style="left:1151.5px;top:477.5px;width:32px;text-align:right;font-size:9.5px;color:#222">49pt</div>

<div class="t" style="left:989px;top:498px;font-size:9.5px;color:#70787f">Line width:</div>
<div class="a" style="left:1042px;top:501.5px;width:104px;height:2px;background:#b9bdc1;border-radius:1px"></div>
<div class="a" style="left:1042px;top:501.5px;width:32px;height:2px;background:#3d8ee6;border-radius:1px"></div>
<div class="a" style="left:1069px;top:497px;width:11px;height:11px;border-radius:50%;background:#fff;box-shadow:0 0.5px 2px rgba(0,0,0,.45)"></div>
<div class="a" style="left:1151.5px;top:495.5px;width:34px;height:14px;background:#fff;box-shadow:0 0 1px rgba(0,0,0,.4)"></div>
<div class="t" style="left:1151.5px;top:498px;width:32px;text-align:right;font-size:9.5px;color:#222">14.8pt</div>

<svg class="a" style="left:990.5px;top:518px" width="4" height="6"><path d="M0 0L4 3L0 6Z" fill="#555"/></svg>
<div class="t" style="left:1002.5px;top:517px;font-size:9.5px;color:#70787f">Advanced</div>

<!-- ===== bottom bar ===== -->
<svg class="a" style="left:102.5px;top:590px" width="17" height="17" viewBox="0 0 17 17"><circle cx="8.5" cy="8.5" r="7.2" fill="none" stroke="#5b9bd5" stroke-width="1.3"/><path d="M8 4 V9 H12" fill="none" stroke="#5b9bd5" stroke-width="1.3"/></svg>
<div class="t" style="left:122px;top:593.4px;font-size:11.2px;color:#5b9bd5">Recent</div>
<svg class="a" style="left:190px;top:591px" width="15" height="14" viewBox="0 0 15 14"><path d="M1 6.5 L7 0.5 H13.5 V7 L7.5 13 Z" fill="#4d5762"/><circle cx="10.8" cy="3.3" r="1.2" fill="#e3e6ea"/></svg>
<div class="t" style="left:207.5px;top:593.4px;font-size:11.2px;color:#5d6670">Tag</div>
<svg class="a" style="left:579px;top:592.5px" width="12" height="12" viewBox="0 0 12 12"><circle cx="4.8" cy="4.8" r="3.6" fill="none" stroke="#4d5762" stroke-width="1.7"/><line x1="7.5" y1="7.5" x2="11" y2="11" stroke="#4d5762" stroke-width="2.2"/></svg>
<div class="t" style="left:596px;top:593.4px;font-size:11.2px;color:#5d6670">77%</div>
<svg class="a" style="left:623px;top:597px" width="4" height="3"><path d="M0 3H4L2 0Z" fill="#5d6670"/></svg>
<div class="t" style="left:652px;top:593.6px;font-size:10.9px;color:#5d6670">1260 x 750 @2x</div>
<svg class="a" style="left:735px;top:597px" width="4" height="3"><path d="M0 3H4L2 0Z" fill="#5d6670"/></svg>
<svg class="a" style="left:1052px;top:590px" width="15" height="16" viewBox="0 0 15 16"><line x1="1.5" y1="14.5" x2="9.5" y2="6.5" stroke="#4d5762" stroke-width="2"/><path d="M10.5 1 L11 3.5 L13.5 3 L12 5 L14 7 L11.5 6.8 L10.8 9 L10 6.5 L7.5 6 L9.8 4.5Z" fill="#4d5762"/></svg>
<div class="t" style="left:1071px;top:593.4px;font-size:11.2px;color:#5d6670">Effects</div>
<svg class="a" style="left:1121px;top:591px" width="15" height="15" viewBox="0 0 15 15"><g fill="#4f93d2"><circle cx="7.5" cy="7.5" r="5"/><rect x="6" y="0" width="3" height="15"/><rect x="0" y="6" width="15" height="3"/><rect x="6" y="0" width="3" height="15" transform="rotate(45 7.5 7.5)"/><rect x="6" y="0" width="3" height="15" transform="rotate(-45 7.5 7.5)"/></g><circle cx="7.5" cy="7.5" r="2.2" fill="#e3e6ea"/></svg>
<div class="t" style="left:1140px;top:593.4px;font-size:11.2px;color:#5b9bd5">Properties</div>

<!-- ===== tray thumbnails ===== -->
<!-- t1 -->
<div class="a" style="left:90px;top:622px;width:109.5px;height:65.5px;background:#f2f3f4;overflow:hidden;box-shadow:0 1px 2px rgba(0,0,0,.3)">
  <div class="a" style="left:0;top:0;width:110px;height:12.6px;background:#e6e8eb;border-bottom:1px solid #b8c8d8"></div>
  <div class="a" style="left:2px;top:2px;width:3px;height:3px;border-radius:50%;background:#f77"></div>
  <div class="a" style="left:6px;top:2px;width:3px;height:3px;border-radius:50%;background:#fc4"></div>
  <div class="a" style="left:10px;top:2px;width:3px;height:3px;border-radius:50%;background:#4c6"></div>
  <div class="a" style="left:4px;top:5.5px;width:3px;height:2.5px;border-top:1px solid #889;border-bottom:1px solid #889"></div>
  <div class="a" style="left:11px;top:5.5px;width:3px;height:3px;border-radius:50%;background:#c44"></div>
  <div class="a" style="left:2px;top:10px;width:16px;height:1px;background:#bbc"></div>
  <div class="a" style="left:76px;top:5px;width:3px;height:4px;background:#667"></div>
  <div class="a" style="left:83px;top:5px;width:2px;height:4px;background:#889"></div>
  <div class="a" style="left:89px;top:5px;width:4px;height:3px;border-radius:50%;background:#4a9fe0"></div>
  <div class="a" style="left:96px;top:5px;width:4px;height:4px;border:1px solid #889"></div>
  <div class="a" style="left:103px;top:5px;width:4px;height:4px;border-radius:50%;background:#556"></div>
  <div class="a" style="left:41px;top:13px;width:5px;height:53px;background:#fbfbfb"></div>
  <div class="a" style="left:46px;top:12.6px;width:43.5px;height:34px;background:#6b2f7c"></div>
  <div class="t" style="left:46px;top:21.5px;width:43px;text-align:center;font-size:8px;color:#ecdcef;line-height:9.3px">Sales<br>Update</div>
  <div class="a" style="left:89.5px;top:12.6px;width:21px;height:34px;background:#e85a50"></div>
  <div class="a" style="left:92px;top:15px;width:18px;height:29px;background:linear-gradient(90deg,#e8e8e4 0,#f4f4f0 40%,#9a9890 60%,#5a7a78 100%)"></div>
  <div class="a" style="left:46px;top:46.6px;width:43.5px;height:19px;background:linear-gradient(90deg,#d8d0c0,#e8e0d8 20%,#5a7ab8 50%,#c05a50 65%,#3a8ae0 80%,#a0a8b8)"></div>
  <div class="a" style="left:89.5px;top:46.6px;width:21px;height:19px;background:#e8d8c4"></div>
  <div class="a" style="left:92px;top:48px;width:11px;height:18px;background:#7a4a28"></div>
  <div class="a" style="left:53.4px;top:38.3px;width:35.5px;height:18px;background:#1cb89c;border-radius:2.5px"></div>
</div>
<!-- t2 -->
<div class="a" style="left:219px;top:622px;width:100px;height:65.5px;background:#fff;overflow:hidden;box-shadow:0 1px 2px rgba(0,0,0,.3)">
  <div class="a" style="left:6.2px;top:6.3px;width:43.3px;height:34px;background:#6b2f7c"></div>
  <div class="t" style="left:6px;top:15px;width:43px;text-align:center;font-size:8px;color:#ecdcef;line-height:9.3px">Sales<br>Update</div>
  <div class="a" style="left:49.5px;top:6.3px;width:45.2px;height:34px;border:2.5px solid #e85a50;background:#fff"></div>
  <div class="a" style="left:53px;top:9.5px;width:31px;height:28px;background:linear-gradient(90deg,#f0f0ec 0,#e0e0da 30%,#7a6a50 55%,#c8b888 75%,#5a4a38 100%)"></div>
  <div class="a" style="left:70px;top:12px;width:10px;height:11px;background:#3a3028;border-radius:50%"></div>
  <div class="a" style="left:66px;top:22px;width:14px;height:10px;background:#e0d890;border-radius:4px 4px 0 0"></div>
  <div class="a" style="left:6.2px;top:40.3px;width:43.3px;height:25px;background:linear-gradient(90deg,#c89858 0,#e8e8e8 25%,#3a80d8 55%,#e8e8e8 70%,#5a6ab8 85%,#d8d0c8 100%)"></div>
  <div class="a" style="left:6.2px;top:54px;width:43.3px;height:11px;background:linear-gradient(90deg,#b88840,#403838 30%,#e0e0e0 50%,#4870c0 70%,#302828 90%)"></div>
  <div class="a" style="left:49.5px;top:40.3px;width:45.2px;height:25px;background:#f2e6d8"></div>
  <div class="a" style="left:53px;top:42px;width:10px;height:24px;background:#7a4a28"></div>
  <div class="a" style="left:79px;top:49px;width:8px;height:8px;background:#2a2020;border-radius:50%"></div>
  <div class="a" style="left:76px;top:55px;width:12px;height:11px;background:#f8f0e8;border-radius:5px 5px 0 0"></div>
  <div class="a" style="left:13.5px;top:32px;width:35px;height:17.5px;background:#1cb89c;border-radius:2.5px"></div>
</div>
<!-- t3 -->
<div class="a" style="left:340px;top:622px;width:108.5px;height:65.5px;background:#fff;overflow:hidden;box-shadow:0 1px 2px rgba(0,0,0,.3)">
  <div class="a" style="left:0;top:0;width:110px;height:13px;background:#e6e8eb;border-bottom:1px solid #ccd4dc"></div>
  <div class="a" style="left:2px;top:2px;width:3px;height:3px;border-radius:50%;background:#f77"></div>
  <div class="a" style="left:6px;top:2px;width:3px;height:3px;border-radius:50%;background:#fc4"></div>
  <div class="a" style="left:10px;top:2px;width:3px;height:3px;border-radius:50%;background:#4c6"></div>
  <div class="a" style="left:4px;top:6px;width:3px;height:2.5px;border-top:1px solid #889;border-bottom:1px solid #889"></div>
  <div class="a" style="left:11px;top:6px;width:3px;height:3px;border-radius:50%;background:#c44"></div>
  <div class="a" style="left:76px;top:5px;width:3px;height:4px;background:#667"></div>
  <div class="a" style="left:83px;top:5px;width:2px;height:4px;background:#889"></div>
  <div class="a" style="left:89px;top:5px;width:4px;height:3px;border-radius:50%;background:#4a9fe0"></div>
  <div class="a" style="left:96px;top:5px;width:4px;height:4px;border:1px solid #889"></div>
  <div class="a" style="left:103px;top:5px;width:4px;height:4px;border-radius:50%;background:#556"></div>
  <div class="a" style="left:9.5px;top:16.5px;width:100px;height:5px;background:#1e1e1e"></div>
  <div class="a" style="left:12px;top:18px;width:8px;height:3.5px;background:#e8e8e8"></div>
  <div class="a" style="left:21px;top:18px;width:8px;height:3.5px;background:#555"></div>
  <div class="a" style="left:9.5px;top:21.5px;width:100px;height:6px;background:#f4f4f4;border-bottom:1px solid #ddd"></div>
  <div class="a" style="left:60px;top:22.5px;width:4px;height:3.5px;background:#666"></div>
  <div class="a" style="left:68px;top:22.5px;width:4px;height:3.5px;background:#666"></div>
  <div class="a" style="left:11px;top:30px;width:96px;height:2px;background:repeating-linear-gradient(90deg,#d8d8d8 0 12px,#fff 12px 14px)"></div>
  <div class="a" style="left:11px;top:34px;width:96px;height:2px;background:repeating-linear-gradient(90deg,#d8d8d8 0 12px,#fff 12px 14px)"></div>
  <div class="a" style="left:11px;top:38px;width:96px;height:2px;background:repeating-linear-gradient(90deg,#d8d8d8 0 12px,#fff 12px 14px)"></div>
  <div class="a" style="left:14px;top:49px;width:28px;height:17px;background:linear-gradient(90deg,#8a6a5a,#d8c0b8 40%,#f4e8e8)"></div>
  <div class="a" style="left:16px;top:52px;width:10px;height:14px;background:#4a3830;border-radius:4px 4px 0 0"></div>
  <div class="a" style="left:55px;top:49px;width:29px;height:17px;background:linear-gradient(90deg,#d0d4d8,#606870 40%,#b8bcc0)"></div>
  <div class="a" style="left:98px;top:49px;width:11px;height:17px;background:#a8acb0"></div>
  <div class="a" style="left:62px;top:33px;width:50px;height:24px;background:#f5b400;transform:rotate(-14deg)"></div>
  <div class="t" style="left:66px;top:37px;font-size:7.2px;color:#fff;line-height:8.5px;transform:rotate(-14deg)">Save all photos<br>under this tag</div>
</div>
<!-- t4 -->
<div class="a" style="left:464.5px;top:622px;width:109px;height:65.5px;background:#fff;overflow:hidden;box-shadow:0 1px 2px rgba(0,0,0,.3)">
  <div class="a" style="left:0;top:0;width:110px;height:13px;background:#e6e8eb;border-bottom:1px solid #ccd4dc"></div>
  <div class="a" style="left:2px;top:2px;width:3px;height:3px;border-radius:50%;background:#f77"></div>
  <div class="a" style="left:6px;top:2px;width:3px;height:3px;border-radius:50%;background:#fc4"></div>
  <div class="a" style="left:10px;top:2px;width:3px;height:3px;border-radius:50%;background:#4c6"></div>
  <div class="a" style="left:4px;top:6px;width:3px;height:2.5px;border-top:1px solid #889;border-bottom:1px solid #889"></div>
  <div class="a" style="left:11px;top:6px;width:3px;height:3px;border-radius:50%;background:#c44"></div>
  <div class="a" style="left:76px;top:5px;width:3px;height:4px;background:#667"></div>
  <div class="a" style="left:83px;top:5px;width:2px;height:4px;background:#889"></div>
  <div class="a" style="left:89px;top:5px;width:4px;height:3px;border-radius:50%;background:#4a9fe0"></div>
  <div class="a" style="left:96px;top:5px;width:4px;height:4px;border:1px solid #889"></div>
  <div class="a" style="left:103px;top:5px;width:4px;height:4px;border-radius:50%;background:#556"></div>
  <div class="a" style="left:12.5px;top:17px;width:97px;height:4.5px;background:#2a86e0"></div>
  <div class="a" style="left:36px;top:17px;width:9px;height:4.5px;background:#1a6cc4"></div>
  <div class="a" style="left:12.5px;top:21.5px;width:31px;height:44px;background:#3a3d42"></div>
  <div class="a" style="left:14px;top:23px;width:12px;height:4px;background:#2a86e0"></div>
  <div class="a" style="left:28px;top:33px;width:14px;height:10px;background:#464a50"></div>
  <div class="a" style="left:28px;top:45px;width:14px;height:10px;background:#464a50"></div>
  <div class="a" style="left:14px;top:57px;width:14px;height:9px;background:#464a50"></div>
  <div class="a" style="left:29px;top:57px;width:13px;height:9px;background:#464a50"></div>
  <div class="a" style="left:54px;top:21.5px;width:56px;height:24px;background:linear-gradient(90deg,#d8d8d8,#b8b8b8 60%,#d0d0d0)"></div>
  <div class="a" style="left:57px;top:28px;width:45px;height:10px;background:repeating-linear-gradient(0deg,#555 0 1px,transparent 1px 4px);opacity:.6"></div>
  <div class="a" style="left:57px;top:50px;width:20px;height:2px;background:#ccc"></div>
  <div class="a" style="left:15px;top:36px;width:16px;height:10px;background:#e8343c;border-radius:50% 30% 30% 50%"></div>
  <div class="t" style="left:20px;top:37.5px;font-size:7px;font-weight:bold;color:#fff">1</div>
  <div class="a" style="left:15px;top:48px;width:16px;height:10px;background:#e8343c;border-radius:50% 30% 30% 50%"></div>
  <div class="t" style="left:20px;top:49.5px;font-size:7px;font-weight:bold;color:#fff">2</div>
  <div class="a" style="left:88px;top:54px;width:22px;height:12px;background:#1db39b;border-radius:2px"></div>
  <div class="t" style="left:90px;top:55.5px;font-size:5.5px;color:#fff;line-height:6px">Add your<br>copy here</div>
</div>
<!-- t5 -->
<div class="a" style="left:589px;top:622px;width:109px;height:65.5px;background:#fff;overflow:hidden;box-shadow:0 1px 2px rgba(0,0,0,.3)">
  <div class="a" style="left:0;top:0;width:110px;height:8px;background:#222"></div>
  <div class="a" style="left:2px;top:3px;width:12px;height:5px;background:#eee"></div>
  <div class="a" style="left:15px;top:3px;width:11px;height:5px;background:#555"></div>
  <div class="a" style="left:27px;top:3px;width:11px;height:5px;background:#555"></div>
  <div class="a" style="left:0;top:8px;width:110px;height:7px;background:#f0f0f0"></div>
  <div class="a" style="left:47px;top:9px;width:5px;height:4px;background:#555"></div>
  <div class="a" style="left:57px;top:9px;width:5px;height:4px;background:#555"></div>
  <div class="a" style="left:2px;top:17.5px;width:106px;height:2px;background:repeating-linear-gradient(90deg,#d4d4d4 0 13px,#fff 13px 16px)"></div>
  <div class="a" style="left:0;top:22px;width:106px;height:2px;background:repeating-linear-gradient(90deg,#d8d8d8 0 13px,#fff 13px 16px)"></div>
  <div class="a" style="left:0;top:26.5px;width:106px;height:2px;background:repeating-linear-gradient(90deg,#d8d8d8 0 13px,#fff 13px 16px)"></div>
  <div class="a" style="left:7px;top:43px;width:36px;height:23px;background:#c4aca4"></div>
  <div class="a" style="left:7px;top:47px;width:14px;height:19px;background:#4a3a32"></div>
  <div class="a" style="left:58px;top:43px;width:36px;height:23px;background:#a4a8b0"></div>
  <div class="a" style="left:66px;top:26px;width:52px;height:29px;background:#f5b400;transform:rotate(-13deg)"></div>
  <div class="t" style="left:70px;top:29px;font-size:8.5px;color:#fff;line-height:10.5px;transform:rotate(-13deg)">Save all ph<br>under this</div>
</div>
<!-- t6 -->
<div class="a" style="left:714px;top:622px;width:109.5px;height:65.5px;background:#fff;overflow:hidden;box-shadow:0 1px 2px rgba(0,0,0,.3)">
  <div class="a" style="left:0;top:0;width:7px;height:10px;background:#f4b400"></div>
  <div class="a" style="left:10px;top:2.5px;width:22px;height:1.5px;background:#999"></div>
  <div class="a" style="left:10px;top:6.5px;width:100px;height:1px;background:#c4c4c4"></div>
  <div class="a" style="left:10px;top:12px;width:90px;height:1px;background:#c8c8c8"></div>
  <div class="a" style="left:0;top:10.5px;width:110px;height:4px;background:#f2f2f2;border-bottom:1px solid #ddd"></div>
  <div class="a" style="left:10px;top:16px;width:20px;height:1.5px;background:#2a6fd0"></div>
  <div class="a" style="left:0;top:18px;width:110px;height:48px;background:#eee"></div>
  <div class="a" style="left:10px;top:19px;width:20px;height:13px;background:#f46a12"></div>
  <div class="a" style="left:10px;top:35px;width:20px;height:13px;background:#fff"></div>
  <div class="a" style="left:25px;top:40px;width:3px;height:4px;background:#f46a12"></div>
  <div class="a" style="left:10px;top:48px;width:20px;height:12px;background:#f46a12"></div>
  <div class="a" style="left:16px;top:49px;width:8px;height:10px;background:#fff"></div>
  <div class="a" style="left:10px;top:62px;width:20px;height:4px;background:#333"></div>
  <div class="a" style="left:36px;top:19px;width:2px;height:47px;background:#ccc"></div>
  <div class="a" style="left:39px;top:21px;width:71px;height:45px;background:#f46a12"></div>
  <div class="a" style="left:47px;top:28px;width:63px;height:1.5px;background:#fbb"></div>
  <div class="a" style="left:47px;top:53px;width:63px;height:1px;background:#f9a070"></div>
</div>
<!-- t7 selected -->
<div class="a" style="left:836.6px;top:620px;width:113.5px;height:70px;border:3px solid #5b9bd9;border-radius:5px;background:#fff;overflow:hidden">
  <div class="a" style="left:0;top:0;width:7px;height:9px;background:#f4b400"></div>
  <div class="a" style="left:13px;top:3px;width:20px;height:1.5px;background:#999"></div>
  <div class="a" style="left:10px;top:7px;width:52px;height:1px;background:#bbb"></div>
  <div class="a" style="left:62px;top:7px;width:30px;height:1px;background:#ddd"></div>
  <div class="a" style="left:0;top:10.5px;width:110px;height:4px;background:#f4f4f4;border-bottom:1px solid #e0e0e0"></div>
  <div class="a" style="left:40px;top:11.5px;width:40px;height:1.5px;background:#999"></div>
  <div class="a" style="left:0;top:15px;width:9px;height:52px;background:#f0f0f0"></div>
  <div class="a" style="left:75px;top:15px;width:35px;height:5px;background:#eee"></div>
  <div class="a" style="left:10.5px;top:17px;width:19.5px;height:11.3px;background:#f46a12"></div>
  <div class="a" style="left:32px;top:17px;width:19px;height:11.3px;background:#f46a12"></div>
  <div class="a" style="left:58px;top:17px;width:14px;height:11px;border:1px solid #e6e6e6"></div>
  <div class="a" style="left:13px;top:29.5px;width:12px;height:1px;background:#999"></div>
  <div class="a" style="left:35px;top:29.5px;width:12px;height:1px;background:#999"></div>
  <div class="a" style="left:59px;top:29.5px;width:12px;height:1px;background:#999"></div>
  <div class="a" style="left:10.5px;top:48.5px;width:8px;height:10.7px;background:#333"></div>
  <div class="a" style="left:16.2px;top:31.5px;width:50px;height:50px;border-radius:50%;background:#fff;overflow:hidden">
    <div class="a" style="left:25.5px;top:4.1px;width:25px;height:26.2px;background:#f46a12"></div>
    <div class="a" style="left:5px;top:16px;width:16px;height:1px;background:#f4834c"></div>
    <div class="a" style="left:8px;top:19.5px;width:10px;height:1px;background:#888"></div>
    <div class="a" style="left:0;top:0;width:50px;height:50px;border-radius:50%;border:2.8px solid #15b797"></div>
  </div>
  <div class="a" style="left:74.5px;top:20px;width:36px;height:48px;background:#0452a0"></div>
  <div class="a" style="left:82.5px;top:27px;width:28px;height:1.2px;background:#cfe0f4"></div>
  <div class="t" style="left:82px;top:33.3px;font-size:10.5px;font-weight:bold;color:#fff;line-height:13.3px">Maki<br>Prese<br>Stick</div>
  <div class="a" style="left:1.1px;top:1.7px;width:18.4px;height:18.4px;border-radius:50%;border:3.6px solid #15b797"></div>
</div>
<!-- t8 -->
<div class="a" style="left:963px;top:622px;width:109px;height:65.5px;background:#fff;overflow:hidden;box-shadow:0 1px 2px rgba(0,0,0,.3)">
  <div class="a" style="left:0;top:0;width:7px;height:10px;background:#f4b400"></div>
  <div class="a" style="left:10px;top:2.5px;width:22px;height:1.5px;background:#999"></div>
  <div class="a" style="left:10px;top:6.5px;width:95px;height:1px;background:#c4c4c4"></div>
  <div class="a" style="left:0;top:11px;width:110px;height:4px;background:#f2f2f2;border-bottom:1px solid #ddd"></div>
  <div class="a" style="left:0;top:16px;width:110px;height:50px;background:#eee"></div>
  <div class="a" style="left:10px;top:16px;width:21px;height:11px;background:#f46a12"></div>
  <div class="a" style="left:16px;top:16px;width:9px;height:11px;background:#fff"></div>
  <div class="a" style="left:10px;top:29px;width:21px;height:11.5px;background:#2e2e2e"></div>
  <div class="a" style="left:10px;top:43px;width:21px;height:11px;background:#fff"></div>
  <div class="a" style="left:20px;top:43px;width:11px;height:11px;background:#f46a12"></div>
  <div class="a" style="left:10px;top:56px;width:21px;height:10px;background:#f46a12"></div>
  <div class="a" style="left:16px;top:56px;width:9px;height:10px;background:#fff"></div>
  <div class="a" style="left:38.5px;top:21px;width:71px;height:45px;background:#0452a0"></div>
  <div class="a" style="left:80px;top:27px;width:30px;height:1px;background:#fff"></div>
  <div class="t" style="left:82.5px;top:33.3px;font-size:10.5px;font-weight:bold;color:#fff;line-height:13.5px">Maki<br>Prese<br>Stick</div>
</div>
<!-- t9 -->
<div class="a" style="left:1088px;top:622px;width:110px;height:65.5px;background:#fff;overflow:hidden;box-shadow:0 1px 2px rgba(0,0,0,.3)">
  <div class="a" style="left:0;top:0;width:110px;height:6px;background:#2a86e0"></div>
  <div class="a" style="left:2px;top:1px;width:4px;height:4px;border:1px solid #cfe4f8"></div>
  <div class="a" style="left:38.5px;top:0;width:14px;height:6px;background:#1a6cc4"></div>
  <div class="a" style="left:41px;top:2.5px;width:8px;height:1px;background:#cfe4f8"></div>
  <div class="a" style="left:56px;top:2.5px;width:8px;height:1px;background:#8fc0f0"></div>
  <div class="a" style="left:72px;top:2.5px;width:8px;height:1px;background:#8fc0f0"></div>
  <div class="a" style="left:88px;top:2.5px;width:8px;height:1px;background:#8fc0f0"></div>
  <div class="a" style="left:0;top:6px;width:37.8px;height:60px;background:#3b3e43"></div>
  <div class="a" style="left:3px;top:8.5px;width:16px;height:4.5px;background:#2a86e0;border-radius:1px"></div>
  <div class="a" style="left:21px;top:8.5px;width:15px;height:4.5px;background:#2e3136"></div>
  <div class="a" style="left:3px;top:18px;width:6px;height:1px;background:#777"></div>
  <div class="a" style="left:2px;top:22px;width:17px;height:12px;background:#44474d"></div>
  <div class="a" style="left:20px;top:22px;width:16px;height:12px;background:#44474d"></div>
  <div class="a" style="left:2px;top:35px;width:17px;height:12px;background:#44474d"></div>
  <div class="a" style="left:20px;top:35px;width:16px;height:12px;background:#44474d"></div>
  <div class="a" style="left:2px;top:48px;width:17px;height:12px;background:#44474d"></div>
  <div class="a" style="left:20px;top:48px;width:16px;height:12px;background:#44474d"></div>
  <div class="a" style="left:7px;top:51px;width:7px;height:5px;border:1px solid #999;border-radius:2px"></div>
  <div class="a" style="left:25px;top:51px;width:6px;height:6px;border:1px solid #999;border-radius:50%"></div>
  <div class="a" style="left:25px;top:26px;width:6px;height:4px;background:#999"></div>
  <div class="a" style="left:25px;top:39px;width:6px;height:4px;background:#999"></div>
  <svg class="a" style="left:2px;top:23px" width="22" height="26" viewBox="0 0 22 26"><path d="M7 0.5 A6 6 0 0 0 7 12.5 Q14 12 21 6.5 Q14 1 7 0.5Z" fill="#e8343c"/><path d="M7 13.5 A6 6 0 0 0 7 25.5 Q14 25 21 19.5 Q14 14 7 13.5Z" fill="#e8343c"/></svg>
  <div class="t" style="left:7px;top:25px;font-size:8px;font-weight:bold;color:#fff">1</div>
  <div class="t" style="left:7px;top:38px;font-size:8px;font-weight:bold;color:#fff">2</div>
  <div class="a" style="left:49.8px;top:6px;width:61px;height:28.7px;background:linear-gradient(90deg,#cfcfcf,#bdbdbd 60%,#d8d8d8)"></div>
  <svg class="a" style="left:50px;top:8px" width="40" height="26" viewBox="0 0 40 26"><g fill="none" stroke="#333" stroke-width="0.8" opacity=".75"><path d="M2 14 q3 -2 5 0 t5 -1 t6 1 t5 -2 t6 1"/><path d="M3 18 q3 -2 5 0 t6 -1 t5 1 t6 -2 t6 1"/><path d="M2 22 q3 -1 5 0 t5 -1 t6 1 t5 -1 t5 1"/><path d="M10 9 q4 -3 8 -2 t7 -3 t6 -1"/></g></svg>
  <div class="a" style="left:49px;top:47px;width:18px;height:1.5px;background:#ccc"></div>
  <div class="a" style="left:49px;top:55px;width:6px;height:1.5px;background:#ddd"></div>
  <div class="a" style="left:49px;top:62px;width:26px;height:1.5px;background:#ddd"></div>
  <div class="a" style="left:92px;top:44px;width:20px;height:16px;background:#1db39b;border-radius:2px"></div>
  <div class="t" style="left:94px;top:46px;font-size:6px;color:#fff;line-height:7px">Add yo<br>copy f</div>
  <div class="t" style="left:76px;top:53px;font-size:11px;color:#f5c020">&#9733;</div>
</div>
<div class="a" style="left:82px;top:16px;width:2px;height:2px;background:#111;border-radius:0 0 2px 0"></div>
<div class="a" style="left:1196px;top:16px;width:2px;height:2px;background:#111;border-radius:0 0 0 2px"></div>
<div class="a" style="left:82px;top:702px;width:2px;height:2px;background:#111;border-radius:0 2px 0 0"></div>
<div class="a" style="left:1196px;top:702px;width:2px;height:2px;background:#111;border-radius:2px 0 0 0"></div>
</body></html>
